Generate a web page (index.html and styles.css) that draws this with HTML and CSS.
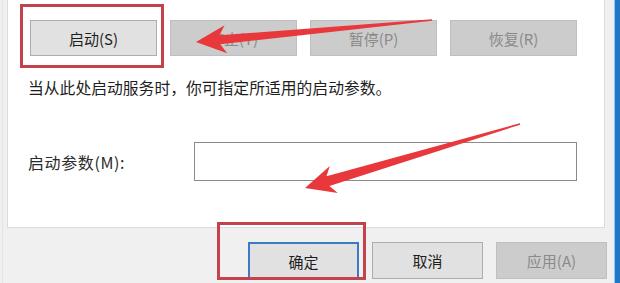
FILE: index.html
```html
<!DOCTYPE html>
<html>
<head>
  <meta charset="utf-8">
  <title>服务属性</title>
  <link rel="stylesheet" href="styles.css">
</head>
<body>
  <div class="window">
    <div class="frame">
      <div class="panel">
        <div class="actions">
          <button class="btn">启动(S)</button>
          <button class="btn" disabled>停止(T)</button>
          <button class="btn" disabled>暂停(P)</button>
          <button class="btn" disabled>恢复(R)</button>
        </div>
        <p class="hint">当从此处启动服务时，你可指定所适用的启动参数。</p>
        <div class="param-row">
          <label class="param-label" for="params">启动参数(M):</label>
          <input class="param-input" id="params" type="text">
        </div>
      </div>
      <div class="footer">
        <button class="btn btn-wide btn-default">确定</button>
        <button class="btn btn-wide">取消</button>
        <button class="btn btn-wide" disabled>应用(A)</button>
      </div>
    </div>
    <div class="accent"></div>
  </div>

  <!-- annotation marks drawn over the dialog -->
  <svg class="marks" width="620" height="283" viewBox="0 0 620 283">
    <rect class="mark-box" x="21.5" y="5.5" width="141" height="61"/>
    <rect class="mark-box" x="218.5" y="223.5" width="146" height="55"/>
    <polygon class="mark-arrow" points="196,42 227.2,53.2 220.3,44.3 432.1,20.7 431.9,19.3 219.5,35.3 224.6,25.3"/>
    <polygon class="mark-arrow" points="305,188 337.8,192.9 329.4,186 520.2,124.7 519.8,123.3 326.5,176.3 329.8,166"/>
  </svg>
</body>
</html>
```

FILE: styles.css
```css
body {
  margin: 0;
  width: 620px;
  height: 283px;
  overflow: hidden;
  position: relative;
  background-color: #f0f0f0;
  color: #1e1e1e;
  font-family: "Noto Sans CJK SC", "Noto Sans", sans-serif;
}
.window {
  display: flex;
  height: 283px;
}
.frame {
  flex: 0 0 609px;
  margin-left: 2px;
  border-left: 1px solid #e4e4e4;
  display: flex;
  flex-direction: column;
}
.panel {
  box-sizing: border-box;
  margin-left: 4px;
  width: 598px;
  height: 228px;
  padding: 20px 0 0 20px;
  background-color: #fff;
  border: 1px solid #dcdcdc;
  border-top: 0;
}
.actions {
  display: flex;
  gap: 13px;
  margin-left: 2px;
}
.btn {
  box-sizing: border-box;
  width: 127px;
  height: 36px;
  padding: 0;
  background-color: #e1e1e1;
  border: 1px solid #adadad;
  color: #1e1e1e;
  font-family: inherit;
  font-size: 15px;
}
.btn:disabled {
  background-color: #cccccc;
  border-color: #bfbfbf;
  color: #8a8a8a;
}
.hint {
  margin: 22px 0 0;
  font-size: 15.8px;
  line-height: 20px;
}
.param-row {
  display: flex;
  align-items: center;
  margin-top: 44px;
}
.param-label {
  width: 166px;
  font-size: 16px;
  letter-spacing: 0.6px;
  color: #2a2a2a;
}
.param-input {
  box-sizing: border-box;
  width: 383px;
  height: 39px;
  margin: 0;
  border: 1px solid #8a8a8a;
  background-color: #fff;
}
.footer {
  flex: 1;
  display: flex;
  justify-content: flex-end;
  align-items: flex-start;
  gap: 13px;
  padding: 14px 5px 0 0;
}
.btn-wide {
  width: 111px;
  height: 37px;
}
.btn-default {
  height: 38px;
  border: 2px solid #3a7bc8;
}
.accent {
  flex: 0 0 8px;
  background: linear-gradient(to right, #e3f1f9 0, #e3f1f9 2px, #8ccbeb 2px, #8ccbeb 3px, #2277c4 3px);
}
.marks {
  position: absolute;
  top: 0;
  left: 0;
  pointer-events: none;
}
.mark-box {
  fill: none;
  stroke: #c4424b;
  stroke-width: 3;
}
.mark-arrow {
  fill: #e8383c;
}
```
